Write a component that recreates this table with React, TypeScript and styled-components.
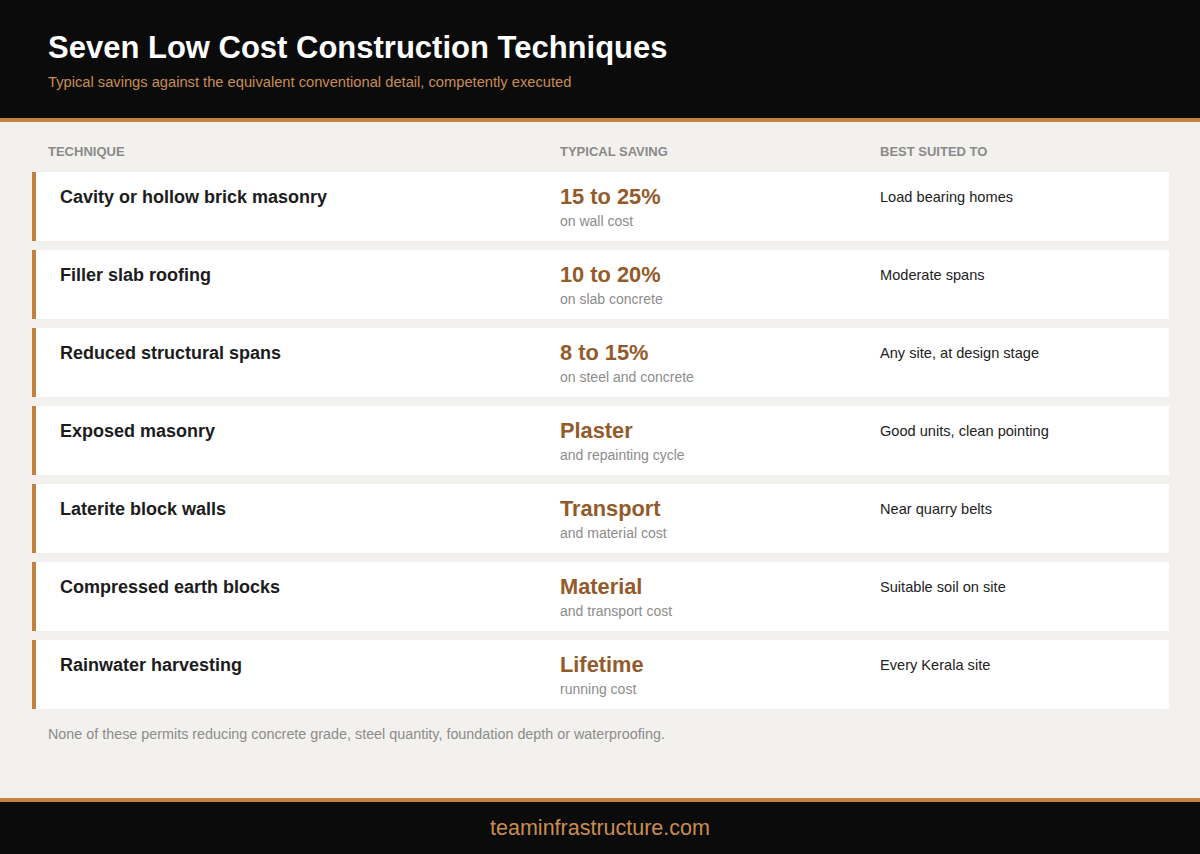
import React from "react";
import styled, { createGlobalStyle } from "styled-components";

const Global = createGlobalStyle`
  html, body { margin: 0; padding: 0; }
  body {
    background: #f2f1ee;
    font-family: "Liberation Sans", Arial, sans-serif;
  }
`;

const Page = styled.div`
  width: 1200px;
  height: 854px;
  display: flex;
  flex-direction: column;
  background: #f2f1ee;
`;

const Header = styled.header`
  background: #0b0b0b;
  border-bottom: 4px solid #c4803f;
  padding: 30px 48px 0;
  box-sizing: border-box;
  height: 122px;
`;

const Title = styled.h1`
  margin: 0;
  color: #ffffff;
  font-size: 31px;
  line-height: 36px;
  font-weight: 700;
`;

const Subtitle = styled.p`
  margin: 7px 0 0;
  color: #c98d52;
  font-size: 14.7px;
  line-height: 18px;
`;

const Main = styled.main`
  flex: 1;
  padding: 22px 31px 0 32px;
`;

const HeadRow = styled.div`
  display: grid;
  grid-template-columns: 512px 320px 1fr;
  padding-left: 16px;
  margin-bottom: 12px;
`;

const HeadLabel = styled.div`
  color: #8a8a8a;
  font-size: 13px;
  line-height: 16px;
  font-weight: 700;
  text-transform: uppercase;
`;

const List = styled.div`
  display: flex;
  flex-direction: column;
  gap: 9px;
`;

const Row = styled.div`
  display: grid;
  grid-template-columns: 500px 320px 1fr;
  align-items: start;
  background: #ffffff;
  border-left: 4px solid #c4803f;
  padding: 12px 24px 11px;
`;

const Name = styled.div`
  color: #1c1c1c;
  font-size: 18px;
  line-height: 26px;
  font-weight: 700;
`;

const Saving = styled.div`
  display: flex;
  flex-direction: column;
`;

const Amount = styled.div`
  color: #935b2b;
  font-size: 21.8px;
  line-height: 26px;
  font-weight: 700;
`;

const Note = styled.div`
  margin-top: 3px;
  color: #8c8c8c;
  font-size: 14px;
  line-height: 17px;
`;

const Suited = styled.div`
  color: #222222;
  font-size: 14.6px;
  line-height: 26px;
`;

const Footnote = styled.p`
  margin: 16px 0 0 16px;
  color: #8c8c8c;
  font-size: 14.35px;
  line-height: 18px;
`;

const Footer = styled.footer`
  height: 56px;
  box-sizing: border-box;
  background: #0b0b0b;
  border-top: 4px solid #c4803f;
  display: flex;
  align-items: center;
  justify-content: center;
  color: #c98d52;
  font-size: 21.5px;
`;

const rows = [
  ["Cavity or hollow brick masonry", "15 to 25%", "on wall cost", "Load bearing homes"],
  ["Filler slab roofing", "10 to 20%", "on slab concrete", "Moderate spans"],
  ["Reduced structural spans", "8 to 15%", "on steel and concrete", "Any site, at design stage"],
  ["Exposed masonry", "Plaster", "and repainting cycle", "Good units, clean pointing"],
  ["Laterite block walls", "Transport", "and material cost", "Near quarry belts"],
  ["Compressed earth blocks", "Material", "and transport cost", "Suitable soil on site"],
  ["Rainwater harvesting", "Lifetime", "running cost", "Every Kerala site"],
];

export default function App() {
  return (
    <Page>
      <Global />
      <Header>
        <Title>Seven Low Cost Construction Techniques</Title>
        <Subtitle>Typical savings against the equivalent conventional detail, competently executed</Subtitle>
      </Header>
      <Main>
        <HeadRow>
          <HeadLabel>Technique</HeadLabel>
          <HeadLabel>Typical Saving</HeadLabel>
          <HeadLabel>Best Suited To</HeadLabel>
        </HeadRow>
        <List>
          {rows.map(([n, a, s, b]) => (
            <Row key={n}>
              <Name>{n}</Name>
              <Saving>
                <Amount>{a}</Amount>
                <Note>{s}</Note>
              </Saving>
              <Suited>{b}</Suited>
            </Row>
          ))}
        </List>
        <Footnote>None of these permits reducing concrete grade, steel quantity, foundation depth or waterproofing.</Footnote>
      </Main>
      <Footer>teaminfrastructure.com</Footer>
    </Page>
  );
}
